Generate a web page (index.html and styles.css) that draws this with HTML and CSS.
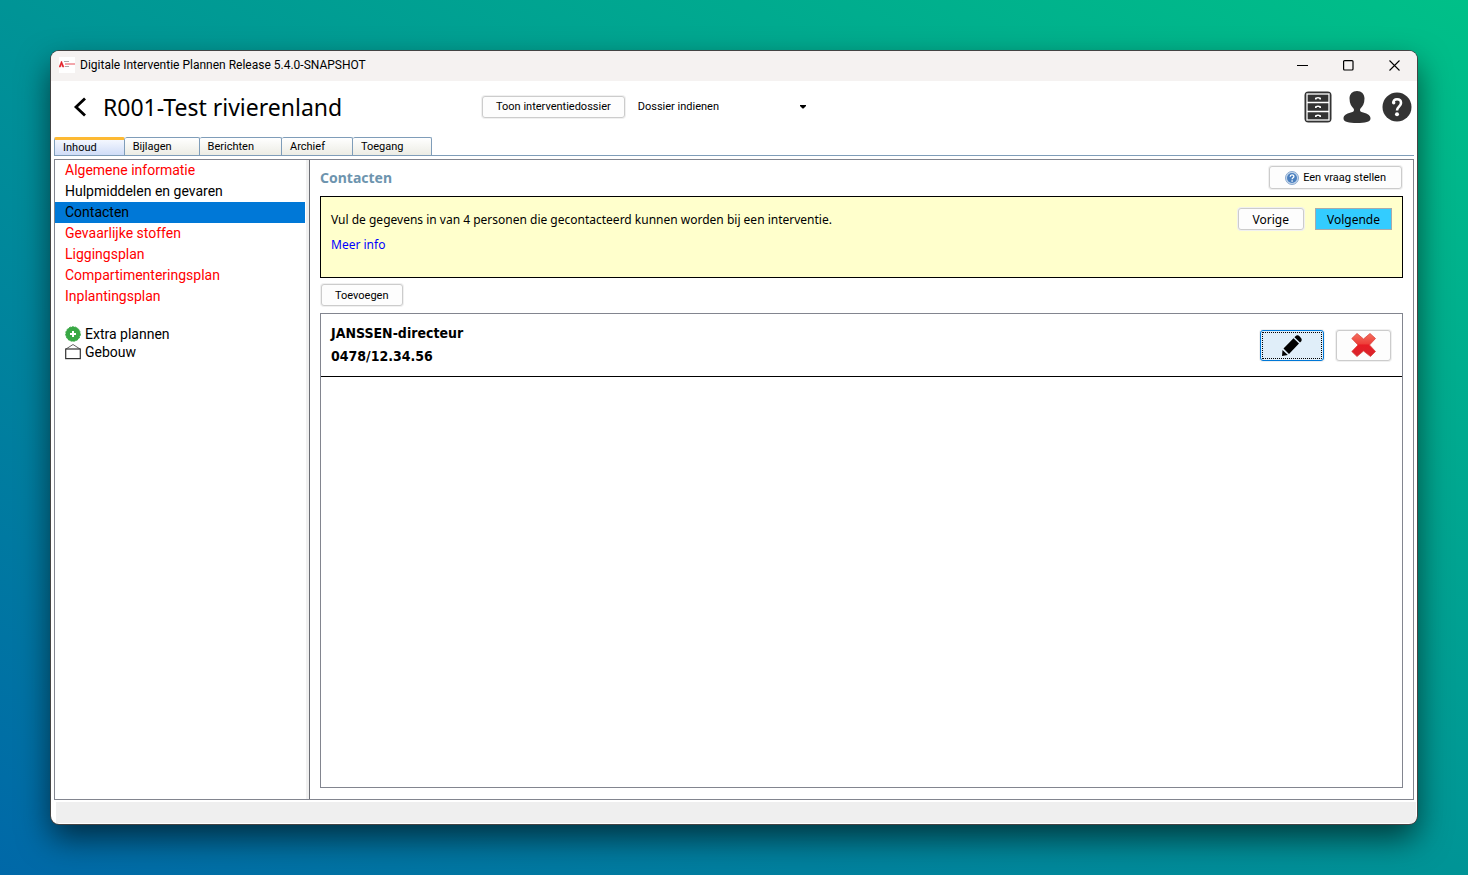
FILE: index.html
```html
<!DOCTYPE html>
<html lang="nl">
<head>
    <meta charset="UTF-8">
    <meta name="viewport" content="width=device-width, initial-scale=1.0">
    <title>Digitale Interventie Plannen</title>
    <link rel="stylesheet" href="styles.css">
</head>
<body>
    <div class="window">
        <div class="titlebar">
            <svg class="app-icon" width="16" height="16" viewBox="0 0 16 16">
                <rect width="16" height="16" fill="#fff"/>
                <path d="M0 10 L2.5 4 L5 10 L3.5 10 L2.5 7 L1.5 10 Z" fill="#e3222b" stroke="#e3222b" stroke-width="0.500"/>
                <path d="M5 4.500h5M6 9.500h4" stroke="#aaa"/>
                <path d="M6 7h10" stroke="#ef8a90" stroke-width="1.500"/>
            </svg>
            <span class="titlebar-text">Digitale Interventie Plannen Release 5.4.0-SNAPSHOT</span>
            <button class="win-btn" aria-label="Minimaliseren">
                <svg width="11" height="11" viewBox="0 0 11 11"><path d="M0 5.500h11" stroke="#000"/></svg>
            </button>
            <button class="win-btn" aria-label="Maximaliseren">
                <svg width="11" height="11" viewBox="0 0 11 11"><rect x="0.600" y="0.600" width="9.400" height="9.400" rx="1" fill="none" stroke="#000" stroke-width="1.200"/></svg>
            </button>
            <button class="win-btn" aria-label="Sluiten">
                <svg width="11" height="11" viewBox="0 0 11 11"><path d="M0.500 0.500l10 10M10.500 0.500l-10 10" stroke="#000" stroke-width="1.100"/></svg>
            </button>
        </div>

        <header class="header">
            <div class="header-title">
                <button class="icon-btn" aria-label="Terug">
                    <svg width="14" height="20" viewBox="0 0 14 20"><path d="M12 1.500L3 10l9 8.500" fill="none" stroke="#000" stroke-width="2.800"/></svg>
                </button>
                <h1>R001-Test rivierenland</h1>
            </div>
            <div class="header-actions">
                <button class="btn">Toon interventiedossier</button>
                <div class="select-box">
                    <select aria-label="Dossier indienen">
                        <option>Dossier indienen</option>
                    </select>
                    <svg class="select-arrow" width="6" height="4" viewBox="0 0 6 4"><path d="M0 0h6v1L3.500 3.500h-1L0 1z"/></svg>
                </div>
            </div>
            <div class="header-icons">
                <button class="icon-btn" aria-label="Archiefkast">
                    <svg width="28" height="32" viewBox="0 0 28 32">
                        <rect x="0.500" y="0.500" width="27" height="31" rx="4" fill="#333"/>
                        <rect x="3" y="3" width="22" height="26" fill="none" stroke="#fff" stroke-width="1.300"/>
                        <path d="M3 11.500h22M3 20.500h22" stroke="#fff" stroke-width="1.300"/>
                        <path d="M11 8.500v-1q0-1.500 3-1.500t3 1.500v1h-1.500l-.5-1h-2l-.5 1zM11 17v-1q0-1.500 3-1.500t3 1.500v1h-1.500l-.5-1h-2l-.5 1zM11 26v-1q0-1.500 3-1.500t3 1.500v1h-1.500l-.5-1h-2l-.5 1z" fill="#fff"/>
                    </svg>
                </button>
                <button class="icon-btn" aria-label="Gebruiker">
                    <svg width="28" height="32" viewBox="0 0 28 32">
                        <path d="M14 0C9.500 0 6.500 3 6.500 7.500c0 5 2 8 4 10 1 1.200.5 3-1 3.500C5 22 .5 23.500.5 27.500.5 31 6 32 14 32s13.500-1 13.500-4.500c0-4-4.500-5.500-9-6.500-1.500-.5-2-2.300-1-3.500 2-2 4-5 4-10C21.500 3 18.500 0 14 0z" fill="#333"/>
                    </svg>
                </button>
                <button class="icon-btn" aria-label="Help">
                    <svg width="30" height="30" viewBox="0 0 30 30">
                        <circle cx="15" cy="15" r="14.500" fill="#333"/>
                        <path d="M11.300 11C11.500 8 13 7.300 15 7.300c2.500 0 4 1.200 4 3.700 0 3.500-4 3.800-4 7.500" fill="none" stroke="#fff" stroke-width="2.600"/>
                        <circle cx="11.700" cy="10.800" r="1.700" fill="#fff"/>
                        <circle cx="15" cy="22.300" r="2" fill="#fff"/>
                    </svg>
                </button>
            </div>
        </header>

        <nav class="tabs">
            <button class="tab active">Inhoud</button>
            <button class="tab">Bijlagen</button>
            <button class="tab">Berichten</button>
            <button class="tab">Archief</button>
            <button class="tab">Toegang</button>
        </nav>

        <div class="panel">
            <aside class="sidebar">
                <ul class="menu">
                    <li><a class="missing" href="#">Algemene informatie</a></li>
                    <li><a href="#">Hulpmiddelen en gevaren</a></li>
                    <li><a class="selected" href="#">Contacten</a></li>
                    <li><a class="missing" href="#">Gevaarlijke stoffen</a></li>
                    <li><a class="missing" href="#">Liggingsplan</a></li>
                    <li><a class="missing" href="#">Compartimenteringsplan</a></li>
                    <li><a class="missing" href="#">Inplantingsplan</a></li>
                </ul>
                <ul class="tree">
                    <li>
                        <a href="#">
                            <svg width="16" height="16" viewBox="0 0 16 16">
                                <circle cx="8" cy="8" r="7.300" fill="#39a845" stroke="#39a845" stroke-dasharray="2 1"/>
                                <path d="M8 5v6M5 8h6" stroke="#fff" stroke-width="2"/>
                            </svg>
                            Extra plannen
                        </a>
                    </li>
                    <li>
                        <a href="#">
                            <svg width="16" height="16" viewBox="0 0 16 16">
                                <path d="M1 5L8 .5 15 5" fill="none" stroke="#666"/>
                                <rect x="0.700" y="5" width="14.600" height="9.600" fill="#fff" stroke="#333" stroke-width="1.200"/>
                            </svg>
                            Gebouw
                        </a>
                    </li>
                </ul>
            </aside>

            <main class="content">
                <div class="content-head">
                    <h2>Contacten</h2>
                    <button class="btn ask-btn">
                        <svg width="14" height="14" viewBox="0 0 14 14">
                            <circle cx="7" cy="7" r="6.500" fill="#c5d7ec" stroke="#8aa9cf"/>
                            <circle cx="7" cy="7" r="5" fill="#4b80bf"/>
                            <path d="M5.200 5.700c0-2.400 3.700-2.300 3.700-.2 0 1.300-1.800 1.300-1.800 2.700M7.100 9.300v1.400" fill="none" stroke="#fff" stroke-width="1.300"/>
                        </svg>
                        Een vraag stellen
                    </button>
                </div>

                <section class="info">
                    <div class="info-text">
                        <p>Vul de gegevens in van 4 personen die gecontacteerd kunnen worden bij een interventie.</p>
                        <a href="#">Meer info</a>
                    </div>
                    <button class="btn nav-btn">Vorige</button>
                    <button class="btn nav-btn next">Volgende</button>
                </section>

                <button class="btn add-btn">Toevoegen</button>

                <ul class="contacts">
                    <li class="contact">
                        <div class="contact-text">
                            <div>JANSSEN-directeur</div>
                            <div>0478/12.34.56</div>
                        </div>
                        <button class="btn edit-btn" aria-label="Bewerken">
                            <svg width="22" height="22" viewBox="0 0 22 22">
                                <path d="M1 22l.5-6L6.800 21zM2.500 14.500L12.500 4.200l5.500 5.300L8 20zM13.500 3.200l1.200-1.300q1.800-1.500 4.300.8t1.500 4.200l-1.500 1.600z"/>
                            </svg>
                        </button>
                        <button class="btn delete-btn" aria-label="Verwijderen">
                            <svg width="26" height="26" viewBox="0 0 26 26">
                                <defs>
                                    <linearGradient id="red" x1="0" y1="0" x2="0" y2="1">
                                        <stop offset="0" stop-color="#f4705f"/>
                                        <stop offset="0.450" stop-color="#ee3f39"/>
                                        <stop offset="0.500" stop-color="#e81d25"/>
                                        <stop offset="1" stop-color="#d8242c"/>
                                    </linearGradient>
                                </defs>
                                <path d="M6 1.500L12.500 7 19 1.500 24.500 6.500 18.500 13 24.500 19.500 19.500 24.500 12.500 19 6 24.500 .8 19.500 7 13 .8 6.500z" fill="url(#red)" stroke="#d9453f" stroke-width="0.800"/>
                            </svg>
                        </button>
                    </li>
                </ul>
            </main>
        </div>

        <footer class="statusbar"></footer>
    </div>
</body>
</html>
```

FILE: styles.css
```css
* {
    box-sizing: border-box;
}

body {
    margin: 0;
    min-height: 100vh;
    padding: 51px;
    display: flex;
    font-family: Roboto, Tahoma, sans-serif;
    font-size: 11px;
    color: #000;
    background: linear-gradient(to top right, #0068a8, #009496 50%, #00c088);
}

button, select {
    font-family: inherit;
    font-size: 11px;
    color: #000;
}

svg {
    display: block;
    flex: none;
}

h1, h2, p, ul {
    margin: 0;
    padding: 0;
    font-weight: normal;
}

ul {
    list-style: none;
}

a {
    color: inherit;
    text-decoration: none;
}

.window {
    flex: 1;
    display: flex;
    flex-direction: column;
    background-color: #fff;
    border-radius: 8px;
    overflow: hidden;
    box-shadow: 0 0 0 1px #444, 0 14px 32px rgba(0, 0, 0, 0.6);
}

/* Title bar */
.titlebar {
    display: flex;
    align-items: center;
    height: 30px;
    padding: 0 0 2px 8px;
    background-color: #f5f2f1;
}

.titlebar-text {
    flex: 1;
    margin-left: 5px;
    font-size: 12px;
}

.win-btn {
    display: flex;
    align-items: center;
    justify-content: center;
    width: 46px;
    height: 28px;
    padding: 0;
    border: none;
    background: none;
}

/* Header */
.header {
    display: flex;
    align-items: center;
    height: 56px;
    padding: 0 5px 5px 22px;
}

.header-title {
    display: flex;
    align-items: center;
    gap: 16px;
    width: 409px;
}

.header-title h1 {
    font-family: "Noto Sans", Tahoma, sans-serif;
    font-size: 23px;
    line-height: 32px;
}

.icon-btn {
    padding: 0;
    border: none;
    background: none;
}

.header-actions {
    flex: 1;
    display: flex;
    align-items: center;
    gap: 8px;
}

.header-icons {
    display: flex;
    align-items: center;
    gap: 11px;
}

.btn {
    display: flex;
    align-items: center;
    justify-content: center;
    height: 22px;
    padding: 0 13px;
    border: 1px solid #ccc;
    border-radius: 3px;
    background-color: #fdfdfd;
    box-shadow: 0 0 0 1px #f0f0f0;
    white-space: nowrap;
}

.select-box {
    position: relative;
    width: 180px;
}

.select-box select {
    appearance: none;
    width: 100%;
    height: 22px;
    padding: 0 5px;
    border: none;
    background: none;
}

.select-arrow {
    position: absolute;
    top: 9px;
    right: 7px;
    pointer-events: none;
}

/* Tabs */
.tabs {
    display: flex;
    margin: 0 3px;
    border-bottom: 1px solid #7f9db9;
}

.tab {
    height: 18px;
    padding: 0 27px 0 8px;
    border: 1px solid #7f9db9;
    border-width: 1px 1px 0 0;
    border-radius: 2px 2px 0 0;
    background: linear-gradient(#fff, #ecece4);
    line-height: 18px;
    text-align: left;
}

.tab.active {
    border-top: 3px solid #fdb933;
    border-left: 1px solid #7f9db9;
    background: linear-gradient(#f4f7ff, #cfdcf7);
    line-height: 14px;
}

/* Main panel */
.panel {
    flex: 1;
    display: flex;
    margin: 3px 3px 0;
    border: 1px solid #82858f;
}

.sidebar {
    width: 255px;
    padding-right: 1px;
    border-right: 1px solid #6c6e75;
    box-shadow: inset -3px 0 #f0f0f0;
    font-size: 14px;
}

.menu a {
    display: block;
    width: 250px;
    padding-left: 10px;
    line-height: 21px;
}

.menu .missing {
    color: #f00;
}

.menu .selected {
    background-color: #0078d7;
}

.tree {
    margin-top: 18px;
    padding-left: 10px;
}

.tree a {
    display: flex;
    align-items: center;
    gap: 4px;
    line-height: 18px;
}

.content {
    flex: 1;
    display: flex;
    flex-direction: column;
    padding: 6px 10px 11px;
}

.content-head {
    display: flex;
    align-items: flex-start;
    justify-content: space-between;
    padding-right: 1px;
}

.content-head h2 {
    font-family: "Noto Sans", Tahoma, sans-serif;
    font-size: 14px;
    font-weight: bold;
    line-height: 24px;
    color: #6d94ae;
}

.ask-btn {
    gap: 4px;
    height: 23px;
    padding: 0 15px;
}

.info {
    display: flex;
    align-items: flex-start;
    gap: 11px;
    min-height: 82px;
    margin-top: 6px;
    padding: 11px 10px;
    border: 1px solid #000;
    background-color: #ffffcc;
    font-family: "Noto Sans", Tahoma, sans-serif;
    font-size: 12px;
}

.info-text {
    flex: 1;
    line-height: 25px;
}

.info-text p {
    line-height: 24px;
}

.info-text a {
    color: #00f;
}

.nav-btn {
    padding: 0 14px;
    font-size: 12px;
}

.next {
    padding: 0 11px;
    border-color: #aaa;
    border-radius: 0;
    background-color: #33ccff;
    box-shadow: none;
}

.add-btn {
    align-self: flex-start;
    margin: 6px 1px 7px;
}

.contacts {
    flex: 1;
    border: 1px solid #82858f;
}

.contact {
    display: flex;
    align-items: center;
    gap: 12px;
    padding: 8px 11px 8px 10px;
    border-bottom: 1px solid #000;
}

.contact-text {
    flex: 1;
    font-family: "DejaVu Sans Condensed", Tahoma, sans-serif;
    font-size: 14px;
    font-weight: bold;
    line-height: 23px;
}

.edit-btn {
    width: 64px;
    height: 31px;
    border-color: #0078d7;
    background-color: #e0eef9;
    outline: 1px dotted #000;
    outline-offset: -3px;
}

.delete-btn {
    width: 55px;
    height: 31px;
}

.statusbar {
    height: 21px;
    margin: 2px 1px 1px 5px;
    background-color: #efefef;
}
```
